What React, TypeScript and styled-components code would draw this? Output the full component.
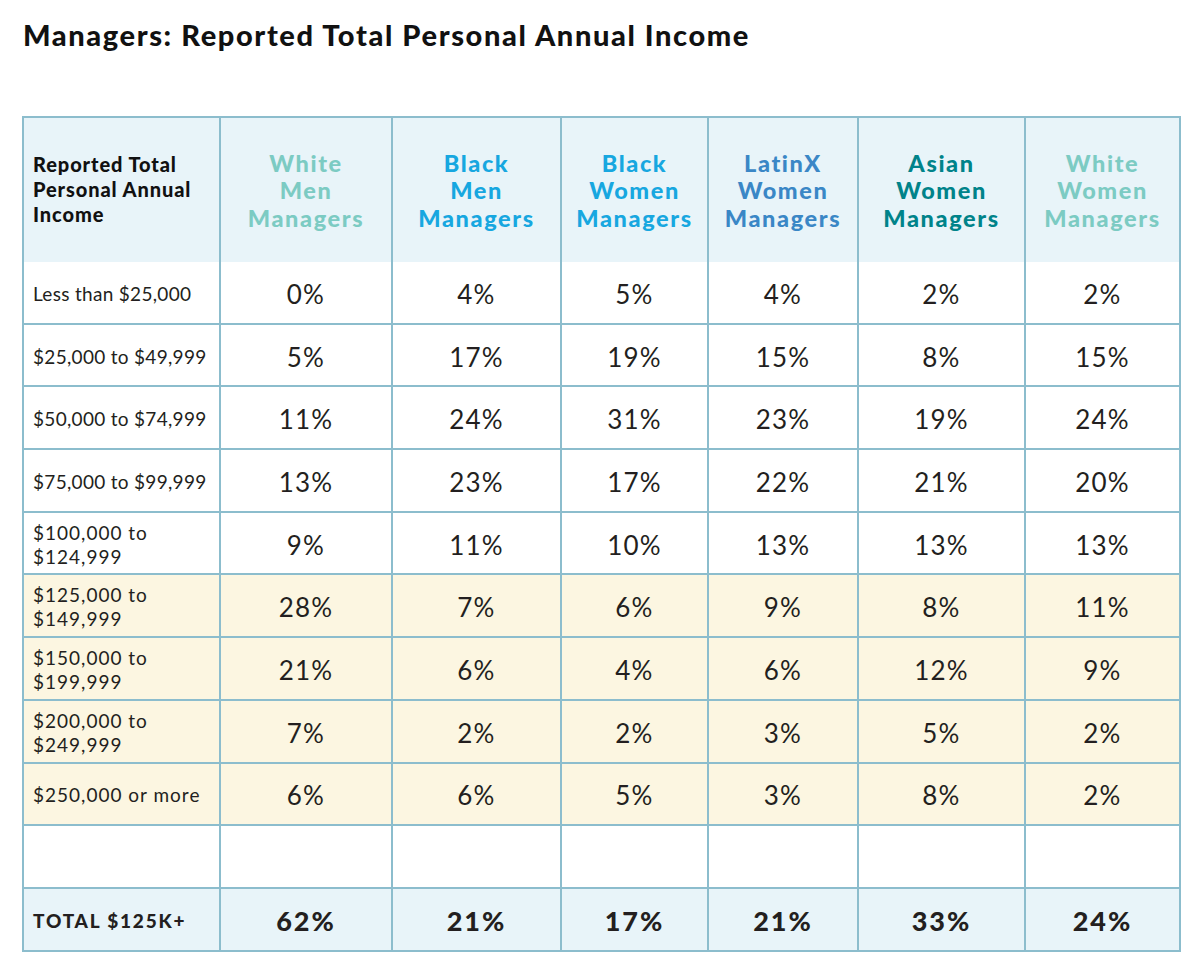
import React from "react";
import styled, { createGlobalStyle } from "styled-components";

const Global = createGlobalStyle`
  html, body { margin: 0; padding: 0; background: #ffffff; }
  body { font-family: "Lato", "Noto Sans", sans-serif; color: #231f20; }
`;

const Page = styled.div`
  width: 1200px;
  height: 977px;
  padding: 20px 0 0 22px;
  box-sizing: border-box;
`;

const Title = styled.h1`
  margin: 0 0 66px 1px;
  font-family: "Lato", sans-serif;
  font-weight: 900;
  font-size: 29px;
  line-height: 30px;
  letter-spacing: 1.6px;
  color: #111111;
`;

const BORDER = "#8cbdcd";

const Grid = styled.div`
  display: grid;
  grid-template-columns: 197px 172px 169px 147px 150px 167px 155px;
  grid-template-rows: 144px repeat(11, 62.7px);
  width: 1159px;
  box-sizing: border-box;
  border-left: 2px solid ${BORDER};
  border-top: 2px solid ${BORDER};
`;

type Tone = "head" | "plain" | "gold" | "total";
const bg: Record<Tone, string> = {
  head: "#e8f4f9",
  plain: "#ffffff",
  gold: "#fcf6e1",
  total: "#e8f4f9",
};

const Cell = styled.div<{ $tone: Tone }>`
  box-sizing: border-box;
  background: ${(p) => bg[p.$tone]};
  border-right: 2px solid ${BORDER};
  border-bottom: ${(p) => (p.$tone === "head" ? "none" : `2px solid ${BORDER}`)};
  display: flex;
  align-items: center;
  min-width: 0;
`;

const LabelCell = styled(Cell)`
  justify-content: flex-start;
  padding: 0 0 0 9px;
`;

const ValueCell = styled(Cell)`
  justify-content: center;
`;

const CornerText = styled.div`
  font-weight: 900;
  font-size: 20px;
  line-height: 25px;
  letter-spacing: 0.9px;
  color: #111111;
  margin-top: -1px;
  white-space: nowrap;
`;

const GroupHead = styled.div<{ $color: string }>`
  width: 100%;
  text-align: center;
  font-weight: 900;
  font-size: 23.5px;
  line-height: 27.5px;
  letter-spacing: 1.6px;
  color: ${(p) => p.$color};
  margin-top: 2px;
  white-space: nowrap;
`;

const RowLabel = styled.div<{ $wide?: boolean }>`
  font-size: 19px;
  line-height: 24px;
  font-weight: 400;
  letter-spacing: ${(p) => (p.$wide ? "1px" : "0.3px")};
  color: #231f20;
  margin-top: 3px;
  white-space: nowrap;
`;

const Value = styled.div`
  font-size: 26px;
  font-weight: 400;
  color: #231f20;
  letter-spacing: 1.2px;
  margin-top: 3px;
`;

const TotalLabel = styled.div`
  font-size: 19px;
  font-weight: 900;
  letter-spacing: 1.8px;
  color: #231f20;
  margin-top: 2px;
  white-space: nowrap;
`;

const TotalValue = styled.div`
  font-size: 27px;
  font-weight: 900;
  letter-spacing: 2px;
  color: #231f20;
  margin-top: 3px;
`;

const groups: { lines: string[]; color: string }[] = [
  { lines: ["White", "Men", "Managers"], color: "#7ccbc3" },
  { lines: ["Black", "Men", "Managers"], color: "#17a7e0" },
  { lines: ["Black", "Women", "Managers"], color: "#17a7e0" },
  { lines: ["LatinX", "Women", "Managers"], color: "#3a87c6" },
  { lines: ["Asian", "Women", "Managers"], color: "#00838a" },
  { lines: ["White", "Women", "Managers"], color: "#7ccbc3" },
];

type Row = { label: string[]; wide?: boolean; values: string[]; tone: Tone };

const rows: Row[] = [
  { label: ["Less than $25,000"], values: ["0%", "4%", "5%", "4%", "2%", "2%"], tone: "plain" },
  { label: ["$25,000 to $49,999"], values: ["5%", "17%", "19%", "15%", "8%", "15%"], tone: "plain" },
  { label: ["$50,000 to $74,999"], values: ["11%", "24%", "31%", "23%", "19%", "24%"], tone: "plain" },
  { label: ["$75,000 to $99,999"], values: ["13%", "23%", "17%", "22%", "21%", "20%"], tone: "plain" },
  { label: ["$100,000 to", "$124,999"], wide: true, values: ["9%", "11%", "10%", "13%", "13%", "13%"], tone: "plain" },
  { label: ["$125,000 to", "$149,999"], wide: true, values: ["28%", "7%", "6%", "9%", "8%", "11%"], tone: "gold" },
  { label: ["$150,000 to", "$199,999"], wide: true, values: ["21%", "6%", "4%", "6%", "12%", "9%"], tone: "gold" },
  { label: ["$200,000 to", "$249,999"], wide: true, values: ["7%", "2%", "2%", "3%", "5%", "2%"], tone: "gold" },
  { label: ["$250,000 or more"], wide: true, values: ["6%", "6%", "5%", "3%", "8%", "2%"], tone: "gold" },
  { label: [], values: ["", "", "", "", "", ""], tone: "plain" },
];

const totals = ["62%", "21%", "17%", "21%", "33%", "24%"];

export default function App() {
  return (
    <>
      <Global />
      <Page>
        <Title>Managers: Reported Total Personal Annual Income</Title>
        <Grid>
          <LabelCell $tone="head">
            <CornerText>
              Reported Total
              <br />
              Personal Annual
              <br />
              Income
            </CornerText>
          </LabelCell>
          {groups.map((g, i) => (
            <ValueCell key={`g${i}`} $tone="head">
              <GroupHead $color={g.color}>
                {g.lines.map((l, j) => (
                  <div key={j}>{l}</div>
                ))}
              </GroupHead>
            </ValueCell>
          ))}
          {rows.map((r, i) => (
            <React.Fragment key={`r${i}`}>
              <LabelCell $tone={r.tone}>
                <RowLabel $wide={r.wide}>
                  {r.label.map((l, j) => (
                    <div key={j}>{l}</div>
                  ))}
                </RowLabel>
              </LabelCell>
              {r.values.map((v, j) => (
                <ValueCell key={j} $tone={r.tone}>
                  <Value>{v}</Value>
                </ValueCell>
              ))}
            </React.Fragment>
          ))}
          <LabelCell $tone="total">
            <TotalLabel>TOTAL $125K+</TotalLabel>
          </LabelCell>
          {totals.map((t, i) => (
            <ValueCell key={`t${i}`} $tone="total">
              <TotalValue>{t}</TotalValue>
            </ValueCell>
          ))}
        </Grid>
      </Page>
    </>
  );
}
